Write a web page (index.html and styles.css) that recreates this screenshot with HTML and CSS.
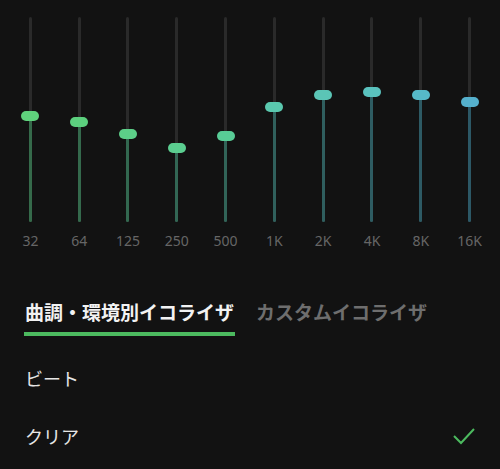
FILE: index.html
```html
<!DOCTYPE html>
<html lang="ja">
<head>
    <meta charset="UTF-8">
    <meta name="viewport" content="width=device-width, initial-scale=1.0">
    <title>イコライザ</title>
    <link rel="stylesheet" href="styles.css">
</head>
<body>
    <section class="eq">
        <div class="band"><div class="track"><div class="fill" style="height: 106px;"></div><div class="knob" style="bottom: 106px;"></div></div><span class="freq">32</span></div>
        <div class="band"><div class="track"><div class="fill" style="height: 100px;"></div><div class="knob" style="bottom: 100px;"></div></div><span class="freq">64</span></div>
        <div class="band"><div class="track"><div class="fill" style="height: 88px;"></div><div class="knob" style="bottom: 88px;"></div></div><span class="freq">125</span></div>
        <div class="band"><div class="track"><div class="fill" style="height: 74px;"></div><div class="knob" style="bottom: 74px;"></div></div><span class="freq">250</span></div>
        <div class="band"><div class="track"><div class="fill" style="height: 86px;"></div><div class="knob" style="bottom: 86px;"></div></div><span class="freq">500</span></div>
        <div class="band"><div class="track"><div class="fill" style="height: 115px;"></div><div class="knob" style="bottom: 115px;"></div></div><span class="freq">1K</span></div>
        <div class="band"><div class="track"><div class="fill" style="height: 127px;"></div><div class="knob" style="bottom: 127px;"></div></div><span class="freq">2K</span></div>
        <div class="band"><div class="track"><div class="fill" style="height: 130px;"></div><div class="knob" style="bottom: 130px;"></div></div><span class="freq">4K</span></div>
        <div class="band"><div class="track"><div class="fill" style="height: 127px;"></div><div class="knob" style="bottom: 127px;"></div></div><span class="freq">8K</span></div>
        <div class="band"><div class="track"><div class="fill" style="height: 120px;"></div><div class="knob" style="bottom: 120px;"></div></div><span class="freq">16K</span></div>
    </section>

    <nav class="tabs">
        <span class="tab active">曲調・環境別イコライザ</span>
        <span class="tab">カスタムイコライザ</span>
    </nav>

    <ul class="presets">
        <li class="preset">ビート</li>
        <li class="preset selected">
            クリア
            <svg class="check" width="22" height="18" viewBox="0 0 22 18">
                <polyline points="1,9 8,16 21,2" fill="none" stroke="#4cba5f" stroke-width="2"/>
            </svg>
        </li>
    </ul>
</body>
</html>
```

FILE: styles.css
```css
body {
    margin: 0;
    width: 500px;
    height: 469px;
    overflow: hidden;
    background: #121212;
    font-family: "Noto Sans CJK JP", "Noto Sans", sans-serif;
}

/* スライダー */
.eq {
    display: flex;
    padding: 17px 6px 0;
}

.band {
    flex: 1;
    display: flex;
    flex-direction: column;
    align-items: center;
}

.track {
    position: relative;
    width: 3px;
    height: 205px;
    background: #2a2a2a;
    border-radius: 2px;
}

.fill {
    position: absolute;
    left: 0;
    right: 0;
    bottom: 0;
    border-radius: 0 0 2px 2px;
}

.knob {
    position: absolute;
    left: 50%;
    width: 18px;
    height: 10px;
    border-radius: 5px;
    transform: translate(-50%, 50%);
}

.band:nth-child(1) .knob { background: #5fd27c; }
.band:nth-child(2) .knob { background: #5cd07e; }
.band:nth-child(3) .knob { background: #5ccf88; }
.band:nth-child(4) .knob { background: #5bce90; }
.band:nth-child(5) .knob { background: #58cc96; }
.band:nth-child(6) .knob { background: #5ac8ae; }
.band:nth-child(7) .knob { background: #5bc5b6; }
.band:nth-child(8) .knob { background: #5ac2be; }
.band:nth-child(9) .knob { background: #56b9c8; }
.band:nth-child(10) .knob { background: #55b0cc; }

.band:nth-child(1) .fill { background: #356a4a; }
.band:nth-child(2) .fill { background: #34694c; }
.band:nth-child(3) .fill { background: #336850; }
.band:nth-child(4) .fill { background: #326654; }
.band:nth-child(5) .fill { background: #316458; }
.band:nth-child(6) .fill { background: #30605c; }
.band:nth-child(7) .fill { background: #2f5e5e; }
.band:nth-child(8) .fill { background: #2e5c62; }
.band:nth-child(9) .fill { background: #2d5a64; }
.band:nth-child(10) .fill { background: #2c5866; }

.freq {
    margin-top: 10px;
    font-family: "Noto Sans", sans-serif;
    font-size: 14px;
    line-height: 17px;
    color: #666666;
}

/* タブ */
.tabs {
    display: flex;
    gap: 20px;
    margin-top: 51px;
    padding-left: 24px;
}

.tab {
    padding: 0 1px 8px;
    font-size: 19px;
    font-weight: bold;
    line-height: 24px;
    color: #6e6e6e;
    border-bottom: 4px solid transparent;
}

.tab.active {
    color: #f2f2f2;
    border-bottom-color: #4cba5f;
}

/* プリセット一覧 */
.presets {
    list-style: none;
    margin: 13px 0 0;
    padding: 0;
}

.preset {
    display: flex;
    align-items: center;
    justify-content: space-between;
    height: 58px;
    padding: 0 25px;
    font-size: 18px;
    color: #e6e6e6;
}
```
